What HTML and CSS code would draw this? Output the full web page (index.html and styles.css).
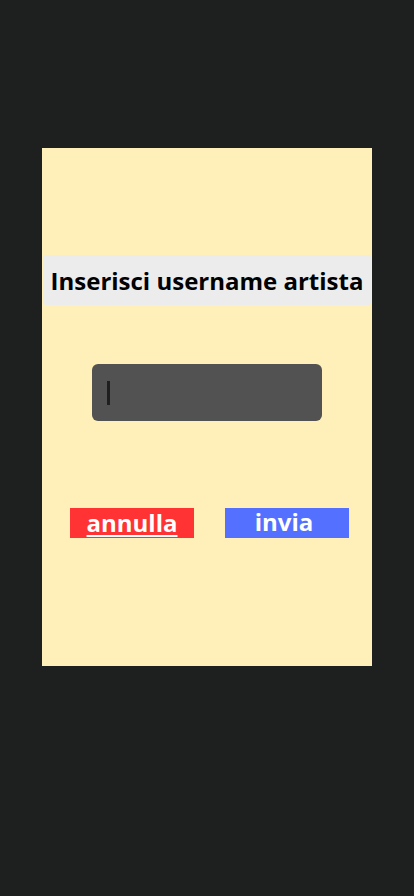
FILE: index.html
```html
<!DOCTYPE html>
<html lang="it">
<head>
<meta charset="utf-8">
<title>Inserisci username artista</title>
<link rel="stylesheet" href="styles.css">
</head>
<body>
<div class="panel">
  <div class="title">Inserisci username artista</div>
  <div class="input"><span class="caret"></span></div>
  <div class="buttons">
    <a class="btn cancel" href="#">annulla</a>
    <span class="btn send">invia</span>
  </div>
</div>
</body>
</html>
```

FILE: styles.css
```css
html, body {
  margin: 0;
  padding: 0;
  background: #1d201f;
  font-family: "Open Sans", "Noto Sans", sans-serif;
}
.panel {
  margin: 148px 0 0 42px;
  width: 330px;
  height: 518px;
  background: #fff0b9;
  display: flex;
  flex-direction: column;
  align-items: center;
  padding-top: 107px;
  box-sizing: border-box;
}
.title {
  width: 328px;
  height: 50px;
  background: #ececec;
  border-radius: 3px;
  display: flex;
  align-items: center;
  justify-content: center;
  font-weight: 700;
  font-size: 24px;
  color: #000;
}
.input {
  margin-top: 59px;
  width: 230px;
  height: 57px;
  background: #525252;
  border-radius: 6px;
  display: flex;
  align-items: center;
  padding-left: 15px;
  box-sizing: border-box;
}
.caret {
  width: 3px;
  height: 24px;
  background: #1d201f;
}
.buttons {
  margin-top: 87px;
  margin-left: 5px;
  width: 279px;
  display: flex;
  justify-content: space-between;
}
.btn {
  width: 124px;
  height: 30px;
  display: flex;
  justify-content: center;
  align-items: center;
  color: #fff;
  font-weight: 700;
  font-size: 24px;
  line-height: 30px;
  box-sizing: border-box;
}
.cancel {
  background: #ff3333;
  text-decoration: underline;
  text-decoration-thickness: 2px;
  text-underline-offset: 3px;
}
.send {
  background: #5470ff;
  align-items: flex-start;
  line-height: 28px;
  padding-right: 6px;
}
```
